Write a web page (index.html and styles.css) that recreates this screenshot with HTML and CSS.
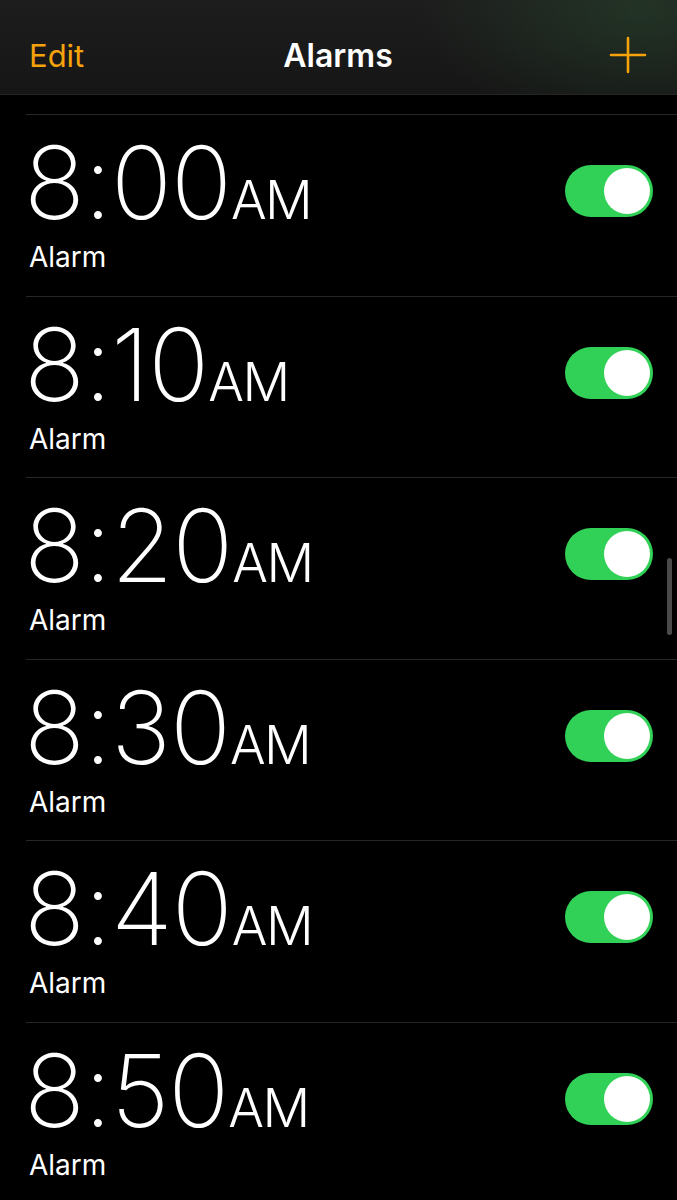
FILE: index.html
```html
<!DOCTYPE html>
<html lang="en">
<head>
  <meta charset="UTF-8">
  <meta name="viewport" content="width=device-width, initial-scale=1.0">
  <title>Alarms</title>
  <link rel="stylesheet" href="styles.css">
</head>
<body>
  <div class="screen">
    <!-- Верхняя панель -->
    <header class="topbar">
      <span class="edit">Edit</span>
      <h1 class="title">Alarms</h1>
      <svg class="add" width="38" height="38" viewBox="0 0 38 38">
        <path d="M19 2 V36 M2 19 H36" stroke="#f5a20b" stroke-width="2.6" stroke-linecap="round"/>
      </svg>
    </header>
    <div class="gap"></div>
    <!-- Список будильников -->
    <div class="list">
      <div class="alarm">
        <div class="info">
          <div class="time">8:00<span class="ampm">AM</span></div>
          <div class="label">Alarm</div>
        </div>
        <div class="toggle"><div class="knob"></div></div>
      </div>
      <div class="alarm">
        <div class="info">
          <div class="time">8:10<span class="ampm">AM</span></div>
          <div class="label">Alarm</div>
        </div>
        <div class="toggle"><div class="knob"></div></div>
      </div>
      <div class="alarm">
        <div class="info">
          <div class="time">8:20<span class="ampm">AM</span></div>
          <div class="label">Alarm</div>
        </div>
        <div class="toggle"><div class="knob"></div></div>
      </div>
      <div class="alarm">
        <div class="info">
          <div class="time">8:30<span class="ampm">AM</span></div>
          <div class="label">Alarm</div>
        </div>
        <div class="toggle"><div class="knob"></div></div>
      </div>
      <div class="alarm">
        <div class="info">
          <div class="time">8:40<span class="ampm">AM</span></div>
          <div class="label">Alarm</div>
        </div>
        <div class="toggle"><div class="knob"></div></div>
      </div>
      <div class="alarm">
        <div class="info">
          <div class="time">8:50<span class="ampm">AM</span></div>
          <div class="label">Alarm</div>
        </div>
        <div class="toggle"><div class="knob"></div></div>
      </div>
    </div>
    <div class="scrollbar"></div>
  </div>
</body>
</html>
```

FILE: styles.css
```css
body {
  margin: 0;
  background: #000;
  font-family: Inter, "Noto Sans", sans-serif;
  color: #fff;
}
.screen {
  position: relative;
  width: 677px;
  height: 1200px;
  overflow: hidden;
  background: #000;
}
.topbar {
  height: 95px;
  display: flex;
  align-items: center;
  justify-content: space-between;
  padding: 16px 30px 0 29px;
  box-sizing: border-box;
  background:
    radial-gradient(ellipse 220px 120px at 640px 10px, rgba(40, 70, 45, 0.55), rgba(0, 0, 0, 0)),
    linear-gradient(180deg, #1d1d1d, #161616);
  border-bottom: 1px solid #262626;
}
.edit {
  color: #f5a20b;
  font-size: 31px;
  width: 80px;
}
.title {
  margin: 0;
  font-size: 32px;
  font-weight: 600;
}
.add {
  width: 38px;
  margin-right: 0;
  margin-left: 42px;
}
.gap {
  height: 19px;
}
.alarm {
  margin-left: 26px;
  height: 181.5px;
  box-sizing: border-box;
  border-top: 1px solid #262626;
  display: flex;
  align-items: flex-start;
  justify-content: space-between;
  padding-right: 24px;
}
.info {
  padding-top: 27px;
}
.time {
  margin-left: -2px;
  font-weight: 160;
  font-size: 101px;
  line-height: 80px;
  letter-spacing: -1px;
}
.ampm {
  font-size: 53px;
  font-weight: 300;
  line-height: 0;
  margin-left: 0;
  letter-spacing: -1.5px;
}
.label {
  padding-left: 3px;
  font-size: 28px;
  line-height: 28px;
  margin-top: 21px;
}
.toggle {
  margin-top: 50px;
  width: 88px;
  height: 52px;
  border-radius: 26px;
  background: #31d158;
  display: flex;
  align-items: center;
  justify-content: flex-end;
  padding: 3px;
  box-sizing: border-box;
}
.knob {
  width: 46px;
  height: 46px;
  border-radius: 50%;
  background: #fff;
}
.scrollbar {
  position: absolute;
  left: 667px;
  top: 558px;
  width: 5px;
  height: 77px;
  border-radius: 3px;
  background: #4a4a4a;
}
```
